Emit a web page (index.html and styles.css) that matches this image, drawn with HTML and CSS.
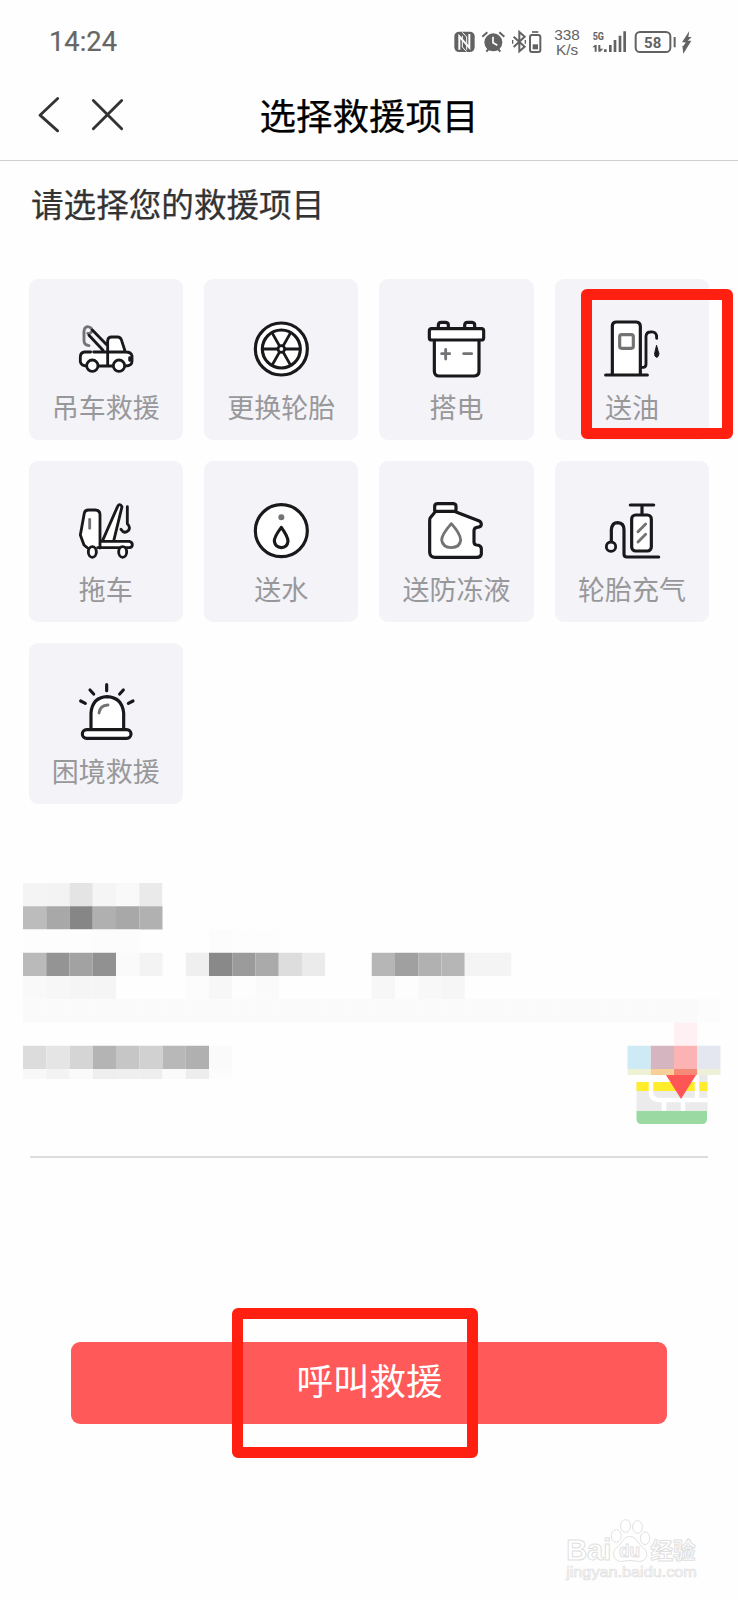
FILE: index.html
```html
<!DOCTYPE html>
<html lang="zh-CN">
<head>
<meta charset="utf-8">
<title>选择救援项目</title>
<link rel="stylesheet" href="styles.css">
</head>
<body>
<div class="screen">
  <div class="status">
    <span class="time">14:24</span>
    <svg class="indicators" viewBox="36 30 726 96">
      <rect x="43" y="50" width="61" height="61" rx="14" fill="#626262"/>
      <path d="M58 104V64L88 98V57" fill="none" stroke="#fff" stroke-width="6"/>
      <path d="M67 52L80 66V104M80 110L67 96V62" fill="none" stroke="#fff" stroke-width="3"/>
      <g fill="none" stroke="#626262" stroke-width="7">
        <circle cx="160" cy="82" r="27" fill="#626262" stroke="none"/>
        <path d="M127 65L142 52M193 65L178 52M139 110L146 102M181 110L174 102" stroke-width="6"/>
        <path d="M159 65V83L172 91" stroke="#fff" stroke-width="5"/>
        <path d="M221 65L254 95L238 109V51L254 65L221 96" stroke-width="6"/>
        <path d="M218 75v11M256 75v11" stroke-width="4"/>
        <rect x="270" y="60" width="31" height="51" rx="6" stroke-width="6"/>
        <path d="M276 51H295" stroke-width="5"/>
        <rect x="278" y="88" width="16" height="15" fill="#626262" stroke="none"/>
      </g>
      <g fill="#626262">
        <text class="rate" x="381" y="75" text-anchor="middle">338</text>
        <text class="rate" x="381" y="119" text-anchor="middle">K/s</text>
        <text class="net" x="458" y="75" textLength="34" lengthAdjust="spacingAndGlyphs">5G</text>
        <path d="M464 90h6v20h-6zM457 97l8-8v8zM475 90h6v20h-6zM481 110l9-9h-9zM492 103h8v8h-8zM507 90h8v21h-8zM521 75h8v36h-8zM536 62h8v49h-8zM550 49h8v62h-8z"/>
        <rect x="587" y="51" width="104" height="60" rx="13" fill="none" stroke="#626262" stroke-width="6"/>
        <text class="charge" x="638" y="98" text-anchor="middle">58</text>
        <path d="M701 66h6v31h-6zM748 48L726 82H737L731 92H727L730 116L754 77H743L755 66H745Z"/>
      </g>
    </svg>
  </div>
  <header class="nav">
    <svg class="nav-icons" viewBox="108 282 270 122">
      <path d="M173 295L120 345L173 392M280 301L365 386M365 301L280 386" fill="none" stroke="#333" stroke-width="8.500" stroke-linecap="round" stroke-linejoin="round"/>
    </svg>
    <h1 class="title">选择救援项目</h1>
  </header>
  <h2 class="heading">请选择您的救援项目</h2>
  <main class="services">
    <div class="tile">
      <svg class="icon" viewBox="161 140 192 192">
        <path class="fill" d="M262 244H190Q180 248 180 260V275Q184 286 192 287H325Q335 284 335 272V252Q330 245 314 244L303 207Q300 200 292 200H272Q264 200 262 208Z"/>
        <path class="g" d="M191 198Q188 170 202 169Q215 171 215 182Q211 191 202 189M191 185V213Q193 225 206 226"/>
        <path d="M216 179L262 226M206 195L248 240M220 245H312M211 245H192Q180 247 180 260V274Q182 286 200 287M236 287H277M315 287Q335 287 335 273V257Q333 245 316 245M262 287V211Q263 200 274 200H292Q300 200 303 208L315 245M328 262V270"/>
        <circle class="fill" cx="216" cy="286" r="17"/><circle class="fill" cx="296" cy="286" r="17"/>
        <circle cx="216" cy="286" r="17"/><circle cx="296" cy="286" r="17"/>
      </svg>
      <span class="label">吊车救援</span>
    </div>
    <div class="tile">
      <svg class="icon" viewBox="688 140 192 192">
        <circle class="fill" cx="785" cy="236" r="78"/>
        <g class="w8"><circle cx="785" cy="236" r="78"/><circle cx="785" cy="236" r="57"/></g>
        <path d="M730 236H773M797 236H840M779 226L757 187M791 226L813 187M779 246L757 285M791 246L813 285"/>
        <circle cx="785" cy="236" r="10"/>
      </svg>
      <span class="label">更换轮胎</span>
    </div>
    <div class="tile">
      <svg class="icon" viewBox="165 140 192 192">
        <path class="fill" d="M178 175H341V209H328V315H193V209H178Z"/>
        <rect class="w8" x="178" y="175" width="163" height="34" rx="7"/>
        <path class="w8" d="M205 173V164Q206 156 213 156H227Q235 157 235 164V173M284 173V164Q285 156 292 156H306Q314 157 314 164V173M193 210V303Q194 317 207 317H313Q327 316 327 303V210"/>
        <path class="g" d="M215 250H239M227 237V266M281 250H305"/>
      </svg>
      <span class="label">搭电</span>
    </div>
    <div class="tile">
      <svg class="icon" viewBox="691 140 192 192">
        <path class="fill" d="M727 311V164Q730 155 738 155H800Q813 156 813 168V311Z"/>
        <path class="w8" d="M708 314H833M728 310V166Q729 155 740 155H800Q812 156 812 168V310"/>
        <path d="M815 291H822Q829 290 829 281V198Q830 185 842 185Q862 182 861 204"/>
        <rect class="g w8" x="750" y="193" width="41" height="41" rx="6"/>
        <path class="drop" d="M861 226Q865 242 868 250Q866 261 861 261Q854 260 855 249Z"/>
      </svg>
      <span class="label">送油</span>
    </div>
    <div class="tile">
      <svg class="icon" viewBox="161 146 192 192">
        <path class="fill" d="M198 179Q230 174 239 184V293H202L180 255ZM248 269L295 165L304 168L282 269ZM240 273H335V290H240Z"/>
        <path d="M202 293L191 284L180 254L192 188Q194 179 205 179H225Q239 180 239 193V293M248 268L292 168Q298 157 305 169L281 268M242 273H327Q336 275 336 283Q336 291 327 292H232"/>
        <path d="M321 169V220Q331 230 325 240Q313 253 302 237"/>
        <ellipse class="fill" cx="216" cy="305" rx="12" ry="16"/><ellipse cx="216" cy="305" rx="12" ry="16"/>
        <ellipse class="fill" cx="307" cy="305" rx="12" ry="16"/><ellipse cx="307" cy="305" rx="12" ry="16"/>
        <path class="g" d="M208 207V234"/>
      </svg>
      <span class="label">拖车</span>
    </div>
    <div class="tile">
      <svg class="icon" viewBox="688 146 192 192">
        <circle class="fill" cx="785" cy="241" r="78"/><circle class="w8" cx="785" cy="241" r="78"/>
        <circle class="dot" cx="785" cy="201" r="9"/>
        <path class="w8" d="M785 231Q763 260 764 273Q767 291 785 292Q803 291 805 273Q805 259 785 231Z"/>
      </svg>
      <span class="label">送水</span>
    </div>
    <div class="tile">
      <svg class="icon" viewBox="165 146 192 192">
        <path class="fill" d="M194 184V160H258V184L334 214V232L312 236V282L333 290V320H180V202Z"/>
        <path class="w8" d="M194 183V167Q195 160 203 160H250Q258 161 258 168V183H197L181 202Q179 204 179 213V306Q180 321 195 321H320Q333 321 334 311V294Q332 284 320 284Q312 283 312 275V240Q313 232 321 231Q334 231 334 222Q334 214 326 211L258 185"/>
        <path class="g" d="M244 220Q215 253 215 269Q218 291 244 292Q270 291 272 269Q271 250 244 220Z"/>
      </svg>
      <span class="label">送防冻液</span>
    </div>
    <div class="tile">
      <svg class="icon" viewBox="691 146 192 192">
        <rect class="fill" x="786" y="194" width="59" height="108" rx="12"/>
        <rect class="w8" x="786" y="194" width="59" height="108" rx="12"/>
        <path class="w8" d="M782 164H852M817 166V192M725 273V238Q727 217 744 217Q763 218 763 238V312Q763 320 772 320H867"/>
        <circle cx="724" cy="289" r="14"/>
        <path class="g" d="M805 244L828 221M805 275L828 252"/>
      </svg>
      <span class="label">轮胎充气</span>
    </div>
    <div class="tile">
      <svg class="icon" viewBox="161 152 192 192">
        <path class="fill" d="M212 295V248Q220 199 260 199Q305 200 310 248V295H328V323H188V297Z"/>
        <path class="w8" d="M212 295V248Q216 201 260 199Q305 201 310 248V295M259 163V181M209 179L220 191M309 179L298 191M181 212L195 219M338 212L324 219"/>
        <rect class="w8" x="186" y="298" width="146" height="26" rx="13"/>
        <path class="g" d="M263 224Q239 225 236 248"/>
      </svg>
      <span class="label">困境救援</span>
    </div>
    <div class="mark mark-fuel"></div>
  </main>
  <section class="location">
    <svg class="mosaic" viewBox="0 0 697.500 242">
      <g id="cells"></g>
      <g transform="translate(-23 -883)">
        <path d="M636.500 1082h71v29h-71z" fill="#ebebeb"/><path d="M699 1075h8.500v7h-8.500z" fill="#e9e9e9"/>
        <path d="M636.500 1082h71v9h-71z" fill="#ffed2c"/>
        <path d="M651 1075V1092Q651 1100 660 1100H707.500M664 1100v11M683 1100v11M697 1075v25" fill="none" stroke="#fff" stroke-width="4.500"/>
        <path d="M636.500 1111H707V1119Q707 1124 702 1124H641.500Q636.500 1124 636.500 1119Z" fill="#9bd9a3"/>
        <path d="M666 1075H696L681 1099Z" fill="#ff5655"/>
      </g>
    </svg>
  </section>
  <footer class="actions">
    <button class="call">呼叫救援</button>
    <div class="mark mark-call"></div>
  </footer>
  <svg class="watermark" viewBox="40 50 410 205">
    <g fill="#fff" stroke="#e0e0e0" stroke-width="3">
      <text class="wm-logo" x="48" y="184" textLength="136" lengthAdjust="spacingAndGlyphs">Bai</text>
      <ellipse cx="199" cy="110" rx="15" ry="19"/><ellipse cx="227" cy="80" rx="15" ry="19"/><ellipse cx="263" cy="83" rx="15" ry="19"/><ellipse cx="286" cy="117" rx="14" ry="19"/>
      <path d="M240 112C220 112 219 132 200 145C183 160 192 188 214 187Q240 181 268 187C292 187 299 161 281 146C262 132 260 112 240 112Z"/>
      <text class="wm-du" x="207" y="174" textLength="64" lengthAdjust="spacingAndGlyphs">du</text>
      <text class="wm-cn" x="302" y="179" textLength="136">经验</text>
      <text class="wm-url" x="48" y="235" textLength="394" lengthAdjust="spacingAndGlyphs">jingyan.baidu.com</text>
    </g>
  </svg>
</div>
<script src="mosaic.js"></script>
</body>
</html>
```
FILE: mosaic.js
```js
// Each entry: row, first column, colours of the consecutive cells, optional height.
const SIZE = 23.25;
const rows = [
  [0, 0, ['#f4f4f4', '#f3f3f3', '#e4e4e4', '#f5f5f5', '#f9f9f9', '#eaeaea', '#fefefe']],
  [1, 0, ['#bcbcbc', '#a8a8a8', '#868686', '#b0b0b0', '#a8a8a8', '#b1b1b1']],
  [2, 0, ['#fdfdfd', '#fdfdfd', '#fdfdfd', '#fcfcfc', '#fcfcfc']],
  [2, 8, ['#fcfcfc', '#fdfdfd', '#fdfdfd']],
  [3, 0, ['#bababa', '#949494', '#a2a2a2', '#919191', '#fafafa', '#f3f3f3']],
  [3, 7, ['#efefef', '#898989', '#9b9b9b', '#aaaaaa', '#dddddd', '#ebebeb', '#fefefe']],
  [3, 15, ['#b6b6b6', '#a0a0a0', '#b1b1b1', '#b6b6b6', '#f4f4f4', '#f4f4f4']],
  [4, 0, ['#f9f9f9', '#f7f7f7', '#f5f5f5', '#f5f5f5']],
  [4, 7, ['#fcfcfc', '#f7f7f7', '#fdfdfd', '#fafafa']],
  [4, 15, ['#f7f7f7', '#fdfdfd', '#f8f8f8', '#f6f6f6']],
  [5, 0, [...Array(29).fill('#fafafa'), '#fcfcfc']],
  [6, 28, ['#fff1f3']],
  [7, 0, ['#dcdcdc', '#e5e5e5', '#d5d5d5', '#b4b4b4', '#c6c6c6', '#d1d1d1', '#b8b8b8', '#b0b0b0', '#fafafa']],
  [7, 26, ['#cdeaf5', '#d5b6c0', '#fcb3b4', '#e4e7ef']],
  [8, 0, ['#f8f8f8', '#f3f3f3', '#fafafa', '#eeeeee', '#efefef', '#eeeeee', '#fafafa', '#ededed', '#fcfcfc'], 0.43],
  [8, 26, ['#eef1d4', '#f7d097', '#f58a78', '#eef1d8'], 0.26]
];
const cells = document.getElementById('cells');
for (const [row, col, colors, height = 1] of rows) {
  colors.forEach((color, i) => {
    const r = document.createElementNS('http://www.w3.org/2000/svg', 'rect');
    r.setAttribute('x', (col + i) * SIZE);
    r.setAttribute('y', row * SIZE);
    r.setAttribute('width', SIZE);
    r.setAttribute('height', height * SIZE);
    r.setAttribute('fill', color);
    cells.appendChild(r);
  });
}
```
FILE: styles.css
```css
* { box-sizing: border-box; }
body {
  margin: 0;
  background: #fefefe;
  font-family: Roboto, "Noto Sans CJK SC", sans-serif;
}
.screen {
  position: relative;
  width: 738px;
  height: 1600px;
  display: flex;
  flex-direction: column;
  overflow: hidden;
}
.status {
  height: 80px;
  padding: 26px 44px 0 49px;
  display: flex;
  justify-content: space-between;
  align-items: flex-start;
}
.time {
  font-size: 27.3px;
  line-height: 33px;
  color: #666;
  -webkit-text-stroke: .2px #666;
}
.indicators { width: 242px; height: 32px; margin-top: -1px; }
.rate { font: 46px "Liberation Sans", sans-serif; }
.net { font: bold 34px Roboto, sans-serif; }
.charge { font: bold 45px Roboto, sans-serif; }
.nav {
  height: 81px;
  border-bottom: 1px solid #d0d0d0;
  padding: 0 36px;
  display: grid;
  grid-template-columns: 90px 1fr 90px;
  align-items: center;
}
.nav-icons { width: 90px; height: 41px; margin-top: -11px; }
.title {
  margin: -5px 0 0;
  text-align: center;
  font-size: 36.500px;
  line-height: 50px;
  font-weight: 400;
  color: #000;
  white-space: nowrap;
  -webkit-text-stroke: .25px #000;
}
.heading {
  margin: 21px 0 0 31px;
  font-size: 32.600px;
  line-height: 48px;
  font-weight: 400;
  color: #333;
  -webkit-text-stroke: .25px #333;
}
.services {
  position: relative;
  margin: 49px 0 0 28.500px;
  display: grid;
  grid-template-columns: repeat(4, 154.500px);
  grid-auto-rows: 160.500px;
  gap: 21.500px 20.900px;
}
.tile {
  background: #f3f3f8;
  border-radius: 9px;
  display: flex;
  flex-direction: column;
  align-items: center;
  padding-top: 37.500px;
}
.icon {
  width: 64px;
  height: 64px;
  fill: none;
  stroke: #19191c;
  stroke-width: 8.500;
  stroke-linecap: round;
  stroke-linejoin: round;
}
.icon .fill { fill: #fff; stroke: none; }
.icon .g { stroke: #737376; }
.icon .w8 { stroke-width: 9.500; }
.icon .drop { fill: #19191c; stroke-width: 3; }
.icon .dot { fill: #737376; stroke: none; }
.label {
  margin-top: 11px;
  font-size: 27px;
  line-height: 34px;
  font-weight: 400;
  color: #98989b;
}
.mark {
  position: absolute;
  border: 11.500px solid #ff2012;
  border-radius: 6px;
}
.mark-fuel { left: 552.500px; top: 9.500px; width: 152px; height: 150.500px; }
.location {
  margin: 79px 30px 0;
  height: 275px;
  border-bottom: 2px solid #dcdcdc;
}
.mosaic {
  display: block;
  width: 697.500px;
  height: 242px;
  margin-left: -7px;
}
.actions {
  position: relative;
  margin: 184px 71px 0;
}
.call {
  display: block;
  width: 596px;
  height: 82px;
  border: 0;
  border-radius: 9px;
  padding: 0 0 7px 1px;
  background: #ff5959;
  color: #fff;
  font: 400 36.500px "Noto Sans CJK SC", sans-serif;
}
.mark-call { left: 160.500px; top: -34px; width: 246.500px; height: 150px; }
.watermark {
  width: 137px;
  height: 68px;
  margin: 92px 0 0 563px;
}
.wm-logo { font: bold 88px "Liberation Sans", sans-serif; }
.wm-du { font: bold 56px "Liberation Sans", sans-serif; }
.wm-cn { font: bold 68px "Noto Sans CJK SC", sans-serif; }
.wm-url { font: 43px "Liberation Sans", sans-serif; stroke-width: 2; }
```
